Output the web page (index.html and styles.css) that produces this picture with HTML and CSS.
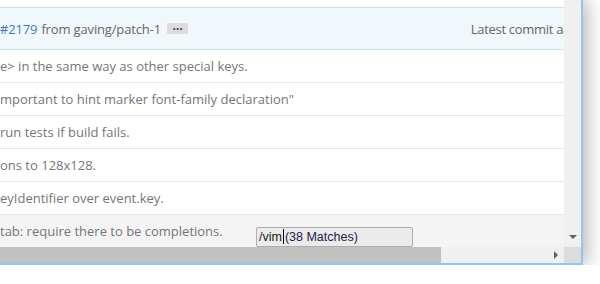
FILE: index.html
```html
<!DOCTYPE html>
<html>
<head>
    <title>Commits - vimium</title>
    <link rel="stylesheet" href="styles.css">
</head>
<body>
    <div class="window">
        <div class="viewport">
            <div class="top-gap"></div>
            <div class="commit-header">
                <div class="merge-title">
                    <a class="issue-link" href="#">#2179</a> from gaving/patch-1<span class="ellipsis">&hellip;</span>
                </div>
                <div class="latest">Latest commit aa</div>
            </div>
            <ul class="commit-list">
                <li class="commit">e&gt; in the same way as other special keys.</li>
                <li class="commit">mportant to hint marker font-family declaration"</li>
                <li class="commit">run tests if build fails.</li>
                <li class="commit">ons to 128x128.</li>
                <li class="commit">eyIdentifier over event.key.</li>
                <li class="commit hovered">tab: require there to be completions.</li>
            </ul>
            <div class="vimium-hud"><span class="query">/vim</span><span class="caret"></span><span class="matches">(38 Matches)</span></div>
        </div>
        <div class="vscroll">
            <span class="arrow-down"></span>
        </div>
        <div class="hscroll">
            <div class="thumb"></div>
            <span class="arrow-right"></span>
        </div>
        <div class="corner"></div>
    </div>
</body>
</html>
```

FILE: styles.css
```css
body {
    margin: 0;
    background: #ffffff;
    font-family: "Open Sans", "Noto Sans", sans-serif;
    overflow: hidden;
}
.window {
    width: 581px;
    height: 263px;
    display: grid;
    grid-template-columns: 564px 17px;
    grid-template-rows: 247px 16px;
    border-right: 2px solid #94c6f0;
    border-bottom: 2px solid #94c6f0;
    box-shadow: 4px 0 18px rgba(0,0,0,0.3);
    background: #fff;
}
.viewport {
    position: relative;
    overflow: hidden;
    background: #fff;
}
.top-gap {
    height: 7px;
}
.commit-header {
    display: flex;
    justify-content: space-between;
    align-items: center;
    height: 41px;
    background: #f1f8fb;
    border-top: 1px solid #c9e0ee;
    border-bottom: 1px solid #c9e0ee;
    font-size: 13px;
    color: #666;
    white-space: nowrap;
}
.merge-title {
    display: flex;
    align-items: center;
    gap: 4px;
    letter-spacing: -0.15px;
}
.issue-link {
    color: #4078c0;
    text-decoration: none;
}
.ellipsis {
    display: inline-block;
    width: 21px;
    height: 11px;
    line-height: 5px;
    margin-left: 2px;
    background: #dddddd;
    color: #444;
    font-weight: bold;
    font-size: 12px;
    text-align: center;
    border-radius: 1px;
}
.latest {
    margin-right: -6px;
    letter-spacing: -0.3px;
}
.commit-list {
    list-style: none;
    margin: 0;
    padding: 0;
}
.commit {
    height: 32px;
    line-height: 32px;
    border-bottom: 1px solid #e8e8e8;
    font-size: 13px;
    color: #767676;
    white-space: nowrap;
}
.commit.hovered {
    background: #f4f4f4;
    height: 40px;
    line-height: 33px;
    border-bottom: none;
}
.vimium-hud {
    position: absolute;
    left: 256px;
    top: 227px;
    width: 153px;
    height: 18px;
    border: 1px solid #adadad;
    border-radius: 2px;
    background: #ebebeb;
    font-family: "Liberation Sans", Arial, sans-serif;
    font-size: 12.5px;
    line-height: 18px;
    padding-left: 2px;
    white-space: nowrap;
}
.query {
    color: #1a1a1a;
}
.caret {
    display: inline-block;
    width: 1px;
    height: 15px;
    background: #000;
    vertical-align: -3px;
    margin: 0 1px;
}
.matches {
    color: #22224a;
}
.vscroll {
    position: relative;
    background: #f0f0f0;
}
.arrow-down {
    position: absolute;
    left: 5px;
    bottom: 8px;
    width: 0;
    height: 0;
    border-left: 4px solid transparent;
    border-right: 4px solid transparent;
    border-top: 4px solid #606060;
}
.hscroll {
    position: relative;
    background: #f0f0f0;
    display: flex;
    align-items: center;
}
.thumb {
    width: 441px;
    height: 16px;
    background: #c1c1c1;
}
.arrow-right {
    position: absolute;
    right: 6px;
    top: 4px;
    width: 0;
    height: 0;
    border-top: 4px solid transparent;
    border-bottom: 4px solid transparent;
    border-left: 4px solid #606060;
}
.corner {
    background: #dcdcdc;
}
```
